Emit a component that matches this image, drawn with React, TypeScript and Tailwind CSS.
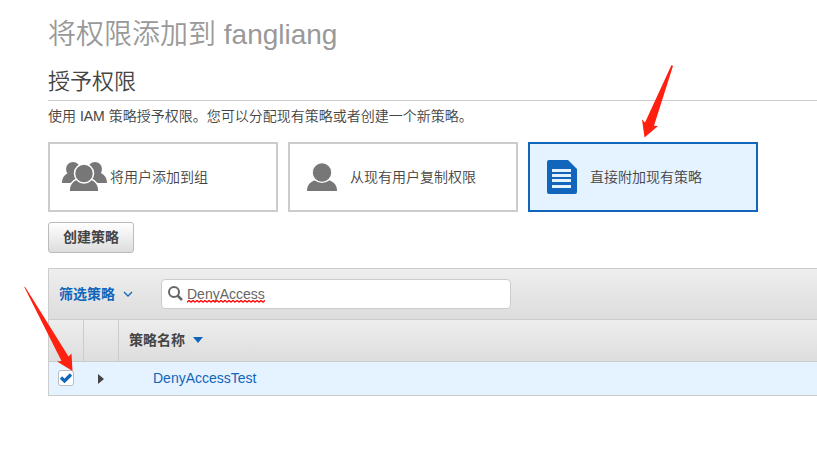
import { useState, type ReactNode } from "react";

function GroupIcon() {
  return (
    <svg width="46" height="34" viewBox="0 0 46 34" fill="#777" aria-hidden="true">
      <circle cx="11" cy="9" r="7" />
      <circle cx="33" cy="9" r="7" />
      <path d="M0 23c0-6 3-8 6-10h9v10zM45 23c0-6-3-8-6-10h-9v10z" />
      <path d="M7 31c0-7 3-10 8-12h14c5 2 8 5 8 12z" stroke="#fff" strokeWidth="1.500" />
      <path d="M8 29h28v2H8z" />
      <circle cx="22" cy="13.500" r="9.500" stroke="#fff" strokeWidth="1.500" />
    </svg>
  );
}

function UserIcon() {
  return (
    <svg width="46" height="34" viewBox="0 0 46 34" fill="#777" aria-hidden="true">
      <path d="M5 31c0-5 2-8 7-10.500h16c5 2.500 7 5.500 7 10.500z" />
      <circle cx="20" cy="12.500" r="9.900" stroke="#fff" strokeWidth="1.300" />
    </svg>
  );
}

function DocumentIcon() {
  return (
    <svg width="46" height="34" viewBox="0 0 46 34" aria-hidden="true">
      <path d="M7 0h19l9 9v23a2 2 0 0 1-2 2H7a2 2 0 0 1-2-2V2a2 2 0 0 1 2-2z" fill="#16b" />
      <path d="M10 9h19v3H10zM10 14h19v3H10zM10 19h19v3H10zM10 25h19v3H10z" fill="#e5f2ff" />
    </svg>
  );
}

type CardProps = { label: string; icon: ReactNode; selected: boolean; onSelect: () => void };

function OptionCard({ label, icon, selected, onSelect }: CardProps) {
  return (
    <button
      type="button"
      aria-pressed={selected}
      onClick={onSelect}
      className={`flex h-[70px] w-[230px] items-center gap-0.5 border-2 pl-3 text-left ${
        selected ? "border-[#1166bb] bg-[#e5f2ff]" : "border-[#ccc] bg-white"
      }`}
    >
      {icon}
      <span>{label}</span>
    </button>
  );
}

export default function App() {
  const [mode, setMode] = useState(2);
  const [query, setQuery] = useState("DenyAccess");
  const [checked, setChecked] = useState(true);

  return (
    <div className="relative overflow-hidden bg-white font-['Liberation_Sans','Noto_Sans_CJK_SC',sans-serif] text-sm font-[350] text-[#444]">
      <main className="pt-3.5 pl-12">
        <h1 className="text-[28px] leading-[42px] font-[350] text-[#999]">将权限添加到 fangliang</h1>
        <h2 className="mt-2 border-b border-[#ccc] text-[22px] leading-9 font-[350]">授予权限</h2>
        <p className="mt-[3px] leading-6">使用 IAM 策略授予权限。您可以分配现有策略或者创建一个新策略。</p>

        <div className="mt-3.5 flex flex-wrap gap-2.5">
          <OptionCard label="将用户添加到组" icon={<GroupIcon />} selected={mode === 0} onSelect={() => setMode(0)} />
          <OptionCard label="从现有用户复制权限" icon={<UserIcon />} selected={mode === 1} onSelect={() => setMode(1)} />
          <OptionCard label="直接附加现有策略" icon={<DocumentIcon />} selected={mode === 2} onSelect={() => setMode(2)} />
        </div>

        <button
          type="button"
          className="mt-2.5 flex h-[31px] items-center rounded-[3px] border border-[#bbb] bg-linear-to-b from-white to-[#ddd] px-3.5 pb-0.5 font-bold"
        >
          创建策略
        </button>

        <section className="mt-[15px]">
          <div className="flex h-[51px] items-center border-t border-l border-[#ccc] bg-linear-to-b from-[#eee] to-[#ddd] pl-2.5">
            <button type="button" className="flex items-center gap-2 font-bold text-[#1166bb]">
              筛选策略
              <svg width="10" height="6" viewBox="0 0 10 6" fill="none" stroke="#16b" strokeWidth="1.300" aria-hidden="true">
                <path d="M1 1l4 4 4-4" />
              </svg>
            </button>
            <label className="relative ml-7 flex h-[30px] w-[350px] items-center gap-1 rounded-[4px] border border-[#ccc] bg-white pl-1.5">
              <svg width="15" height="17" viewBox="0 0 15 17" fill="none" stroke="#666" aria-hidden="true">
                <circle cx="6" cy="6" r="5" strokeWidth="2" />
                <path d="M9.500 9.500l4.500 4.500" strokeWidth="2.500" />
              </svg>
              <input
                type="text"
                aria-label="搜索策略"
                spellCheck={false}
                value={query}
                onChange={(e) => setQuery(e.target.value)}
                className="h-7 min-w-0 flex-1 text-[#666] outline-none"
              />
              <svg width="78" height="3" className="pointer-events-none absolute top-5 left-[25px]" aria-hidden="true">
                <defs>
                  <pattern id="squiggle" width="4" height="3" patternUnits="userSpaceOnUse">
                    <path d="M-1 2l1 0 2-1.500 2 1.500 1 0" fill="none" stroke="#f00" strokeWidth="1.400" />
                  </pattern>
                </defs>
                <rect width="78" height="3" fill="url(#squiggle)" />
              </svg>
            </label>
          </div>

          <table className="w-full table-fixed border-separate border-spacing-0 text-left">
            <colgroup>
              <col className="w-9" />
              <col className="w-[35px]" />
              <col />
            </colgroup>
            <thead>
              <tr className="bg-linear-to-b from-[#eee] to-[#ddd]">
                <th className="h-[43px] border-x border-y border-[#ccc] p-0" aria-label="选择" />
                <th className="border-y border-r border-[#ccc] p-0" aria-label="展开" />
                <th className="border-y border-[#ccc] p-0 pb-0.5 pl-2.5">
                  <button type="button" className="flex items-center gap-2">
                    策略名称
                    <svg width="10" height="6" viewBox="0 0 10 6" fill="#16b" aria-hidden="true">
                      <path d="M0 0h10L5 6z" />
                    </svg>
                  </button>
                </th>
              </tr>
            </thead>
            <tbody>
              <tr className="bg-[#e5f2ff]">
                <td className="h-[34px] border-b border-l border-[#ccc] p-0 pb-0.5">
                  <span className="ml-[9px] grid size-4">
                    <input
                      type="checkbox"
                      aria-label="DenyAccessTest"
                      checked={checked}
                      onChange={(e) => setChecked(e.target.checked)}
                      className="col-start-1 row-start-1 size-4 appearance-none rounded-[3px] border border-[#bbb] bg-white"
                    />
                    {checked && (
                      <svg
                        width="16"
                        height="16"
                        viewBox="0 0 16 16"
                        fill="none"
                        stroke="#16b"
                        strokeWidth="3.200"
                        className="pointer-events-none col-start-1 row-start-1"
                        aria-hidden="true"
                      >
                        <path d="M3 7.500l3.500 3.500L13 4.500" />
                      </svg>
                    )}
                  </span>
                </td>
                <td className="border-b border-[#ccc] p-0">
                  <button type="button" aria-label="展开 DenyAccessTest" className="ml-3.5 block">
                    <svg width="6" height="10" viewBox="0 0 6 10" fill="#444" aria-hidden="true">
                      <path d="M0 0l6 5-6 5z" />
                    </svg>
                  </button>
                </td>
                <td className="border-b border-[#ccc] p-0 pb-0.5 pl-[34px]">
                  <a href="#DenyAccessTest" className="text-[#1166bb]">
                    DenyAccessTest
                  </a>
                </td>
              </tr>
            </tbody>
          </table>
        </section>
      </main>

      {/* Callout arrows over the selected card and the ticked row */}
      <svg
        width="817"
        height="454"
        viewBox="0 0 817 454"
        fill="#ff2010"
        className="pointer-events-none absolute top-0 left-0"
        aria-hidden="true"
      >
        <path d="M671.500 65L673 66L654 125.700L658 126L644.500 137.500L642 119.500L645 122.500Z" />
        <path d="M24 286.500L25.500 287.500L68.500 356.500L71.500 353.500L72.500 371L57 361.500L61.500 361Z" />
      </svg>
    </div>
  );
}
